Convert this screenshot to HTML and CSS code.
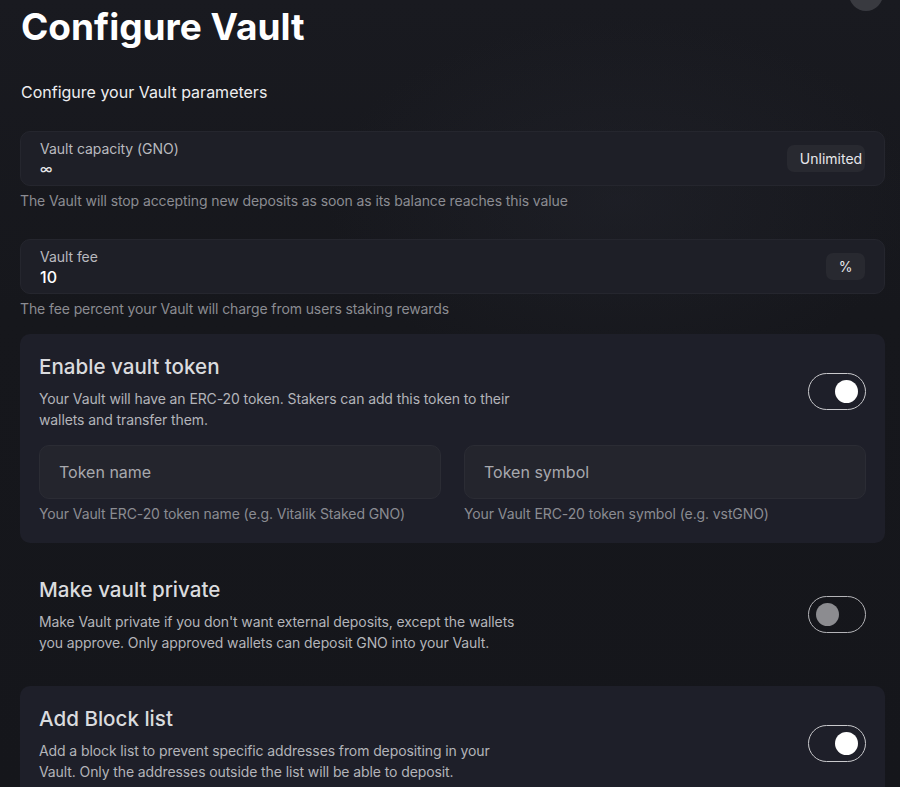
FILE: index.html
```html
<!DOCTYPE html>
<html lang="en">
<head>
<meta charset="utf-8">
<title>Configure Vault</title>
<link rel="stylesheet" href="styles.css">
</head>
<body>
<div class="page">
  <button class="close-btn" aria-label="Close"></button>
  <h1 class="title">Configure Vault</h1>
  <p class="subtitle">Configure your Vault parameters</p>

  <div class="field">
    <div class="field-main">
      <div class="field-label">Vault capacity (GNO)</div>
      <div class="field-value small">∞</div>
    </div>
    <span class="chip chip-unlimited">Unlimited</span>
  </div>
  <p class="hint">The Vault will stop accepting new deposits as soon as its balance reaches this value</p>

  <div class="field field-second">
    <div class="field-main">
      <div class="field-label">Vault fee</div>
      <div class="field-value">10</div>
    </div>
    <span class="chip chip-pct">%</span>
  </div>
  <p class="hint">The fee percent your Vault will charge from users staking rewards</p>

  <section class="card card-active first-card">
    <div class="card-head">
      <div class="card-text">
        <h2 class="card-title">Enable vault token</h2>
        <p class="card-desc">Your Vault will have an ERC-20 token. Stakers can add this token to their wallets and transfer them.</p>
      </div>
      <span class="toggle on"><span class="knob"></span></span>
    </div>
    <div class="token-grid">
      <div class="token-col">
        <div class="token-input">Token name</div>
        <p class="hint">Your Vault ERC-20 token name (e.g. Vitalik Staked GNO)</p>
      </div>
      <div class="token-col">
        <div class="token-input">Token symbol</div>
        <p class="hint">Your Vault ERC-20 token symbol (e.g. vstGNO)</p>
      </div>
    </div>
  </section>

  <section class="card">
    <div class="card-head">
      <div class="card-text">
        <h2 class="card-title">Make vault private</h2>
        <p class="card-desc">Make Vault private if you don't want external deposits, except the wallets you approve. Only approved wallets can deposit GNO into your Vault.</p>
      </div>
      <span class="toggle off"><span class="knob"></span></span>
    </div>
  </section>

  <section class="card card-active">
    <div class="card-head">
      <div class="card-text">
        <h2 class="card-title">Add Block list</h2>
        <p class="card-desc">Add a block list to prevent specific addresses from depositing in your Vault. Only the addresses outside the list will be able to deposit.</p>
      </div>
      <span class="toggle on"><span class="knob"></span></span>
    </div>
  </section>
</div>
</body>
</html>
```

FILE: styles.css
```css
* { box-sizing: border-box; }

html, body {
  margin: 0;
  padding: 0;
  height: 100%;
}

body {
  background-color: #16171c;
  background-image:
    radial-gradient(ellipse 420px 260px at 620px 200px, rgba(40, 42, 52, 0.35), rgba(22, 23, 28, 0) 70%),
    linear-gradient(180deg, #191a20 0%, #16171c 40%, #15161b 100%);
  font-family: Inter, "Noto Sans", "Liberation Sans", sans-serif;
  color: #e6e7ea;
  overflow: hidden;
}

.page {
  position: relative;
  padding: 5px 15px 40px 20px;
  display: flex;
  flex-direction: column;
}

.close-btn {
  position: absolute;
  top: -23px;
  right: 17px;
  width: 34px;
  height: 34px;
  border-radius: 50%;
  border: none;
  background: #393a40;
  padding: 0;
}

.title {
  margin: 0;
  font-size: 37px;
  line-height: 44px;
  font-weight: 700;
  color: #ffffff;
  letter-spacing: 0;
  padding-left: 1px;
}

.subtitle {
  margin: 31px 0 0 0;
  font-size: 16px;
  line-height: 24px;
  color: #eeeef0;
  padding-left: 1px;
}

.field {
  margin-top: 27px;
  height: 55px;
  background: #1e1f27;
  border: 1px solid #25262e;
  border-radius: 10px;
  display: flex;
  align-items: center;
  padding: 0 19px 0 19px;
}

.field-second {
  margin-top: 28px;
}

.field-main {
  flex: 1;
  display: flex;
  flex-direction: column;
}

.field-label {
  font-size: 14px;
  line-height: 20px;
  color: #b9babf;
  letter-spacing: -0.05px;
}

.field-value {
  font-size: 16px;
  line-height: 20px;
  font-weight: 500;
  color: #ffffff;
}

.field-value.small {
  font-size: 13px;
  color: #e4e4e6;
}

.chip {
  height: 27px;
  border-radius: 7px;
  background: #282930;
  color: #e6e7ea;
  font-size: 14px;
  line-height: 27px;
  font-weight: 400;
  display: inline-flex;
  align-items: center;
  justify-content: center;
}

.chip-unlimited {
  width: 78px;
  padding-left: 10px;
}

.chip-pct {
  width: 39px;
}

.hint {
  margin: 5px 0 0 0;
  font-size: 14px;
  line-height: 20px;
  color: #8b8c92;
  letter-spacing: -0.1px;
}

.card {
  margin-top: 14px;
  border-radius: 10px;
  padding: 19px 19px 19px 19px;
}

.first-card {
  margin-top: 15px;
}

.card-active {
  background: #1e1f29;
}

.card-head {
  display: flex;
  align-items: center;
  justify-content: space-between;
}

.card-text {
  max-width: 490px;
}

.card-title {
  margin: 0;
  font-size: 20.6px;
  line-height: 28px;
  font-weight: 500;
  color: #dadbde;
}

.card-desc {
  margin: 7px 0 0 0;
  font-size: 14px;
  line-height: 21px;
  color: #b3b4b9;
  letter-spacing: -0.1px;
}

.toggle {
  width: 58px;
  height: 37px;
  border-radius: 19px;
  border: 1.5px solid #c9c9cc;
  display: flex;
  align-items: center;
  padding: 0 7px;
  flex-shrink: 0;
}

.toggle .knob {
  width: 23px;
  height: 23px;
  border-radius: 50%;
}

.toggle.on {
  justify-content: flex-end;
}

.toggle.on .knob {
  background: #ffffff;
}

.toggle.off {
  justify-content: flex-start;
  border-color: #b4b4b8;
}

.toggle.off .knob {
  background: #8c8c90;
}

.token-grid {
  margin-top: 15px;
  display: grid;
  grid-template-columns: 1fr 1fr;
  column-gap: 23px;
}

.token-input {
  height: 54px;
  border-radius: 10px;
  background: #24252d;
  border: 1px solid #2b2c34;
  display: flex;
  align-items: center;
  padding-left: 19px;
  font-size: 16px;
  color: #a8a9ae;
}
```
